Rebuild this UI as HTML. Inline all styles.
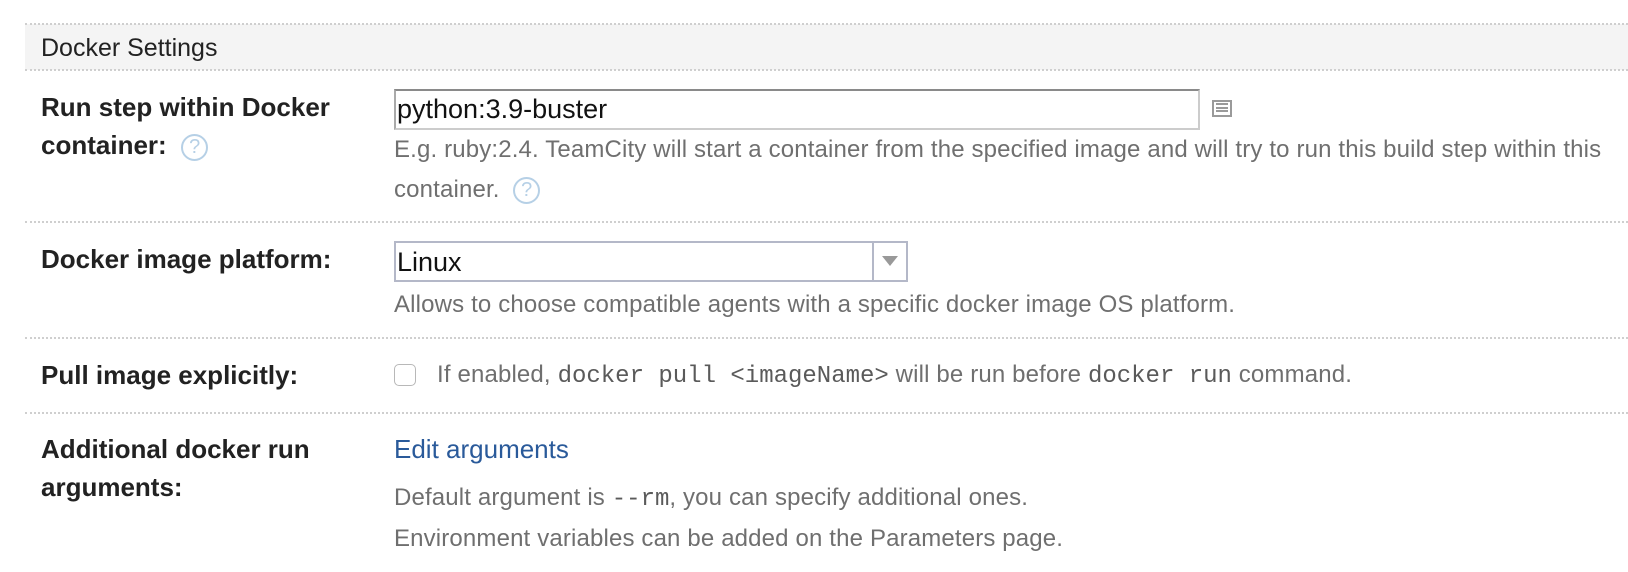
<!DOCTYPE html>
<html><head><meta charset="utf-8"><style>
body{margin:0;width:1628px;height:572px;background:#fff;font-family:"Liberation Sans",Helvetica,Arial,sans-serif;position:relative;overflow:hidden}
.a{position:absolute;white-space:nowrap}
.dot{position:absolute;left:25px;right:0;height:0;border-top:2px dotted #cfcfcf}
.lbl{font-weight:bold;font-size:26px;color:#222;line-height:38px}
.hint{font-size:24px;color:#6f6f6f;line-height:40px;letter-spacing:0.15px}
.mono{font-family:"Liberation Mono",monospace;font-size:24px;color:#5a5a5a;letter-spacing:0}
.q{display:inline-block;width:27px;height:27px;border:2px solid #b6d0e6;border-radius:50%;color:#b6d0e6;font-size:20px;line-height:23px;text-align:center;font-weight:normal;vertical-align:middle;box-sizing:border-box}
</style></head><body>
<div class="a" style="left:25px;top:24px;right:0;height:46px;background:#f4f4f4"></div>
<div class="dot" style="top:23px"></div>
<div class="dot" style="top:69px"></div>
<div class="a" style="left:41px;top:33px;font-size:25px;color:#222;line-height:30px">Docker Settings</div>

<div class="a lbl" style="left:41px;top:88px">Run step within Docker<br>container: &nbsp;<span class="q">?</span></div>
<div class="a" style="left:394px;top:89px;width:806px;height:41px;box-sizing:border-box;border:2px solid #ccc;border-top-color:#8a8a8a;border-left-color:#aaa"></div>
<div class="a" style="left:397px;top:93px;font-size:27px;color:#111;line-height:32px">python:3.9-buster</div>
<div class="a" style="left:1212px;top:100px;width:20px;height:17px;border:2.5px solid #9a9a9a;box-sizing:border-box;padding:1px 2px">
<div style="height:2px;background:#9a9a9a"></div><div style="height:2px;background:#9a9a9a;margin-top:1.5px"></div><div style="height:2px;background:#9a9a9a;margin-top:1.5px"></div></div>
<div class="a hint" style="left:394px;top:130px">E.g. ruby:2.4. TeamCity will start a container from the specified image and will try to run this build step within this<br>container. &nbsp;<span class="q">?</span></div>
<div class="dot" style="top:221px"></div>

<div class="a lbl" style="left:41px;top:240px">Docker image platform:</div>
<div class="a" style="left:394px;top:241px;width:514px;height:41px;box-sizing:border-box;border:2px solid #b4b8c8"></div>
<div class="a" style="left:872px;top:242px;width:2px;height:39px;background:#b4b8c8"></div>
<div class="a" style="left:882px;top:256px;width:0;height:0;border-left:8px solid transparent;border-right:8px solid transparent;border-top:10px solid #999"></div>
<div class="a" style="left:397px;top:246px;font-size:27px;color:#111;line-height:32px">Linux</div>
<div class="a hint" style="left:394px;top:285px">Allows to choose compatible agents with a specific docker image OS platform.</div>
<div class="dot" style="top:337px"></div>

<div class="a lbl" style="left:41px;top:356px">Pull image explicitly:</div>
<div class="a" style="left:394px;top:364px;width:22px;height:22px;border:1.5px solid #b8b8b8;border-radius:5px;box-sizing:border-box"></div>
<div class="a hint" style="left:437px;top:355px">If enabled, <span class="mono">docker pull &lt;imageName&gt;</span> will be run before <span class="mono">docker run</span> command.</div>
<div class="dot" style="top:412px"></div>

<div class="a lbl" style="left:41px;top:430px">Additional docker run<br>arguments:</div>
<div class="a" style="left:394px;top:433px;font-size:26px;color:#2a5a9a;line-height:32px">Edit arguments</div>
<div class="a hint" style="left:394px;top:478px">Default argument is <span class="mono">--rm</span>, you can specify additional ones.</div>
<div class="a hint" style="left:394px;top:519px">Environment variables can be added on the Parameters page.</div>
</body></html>
